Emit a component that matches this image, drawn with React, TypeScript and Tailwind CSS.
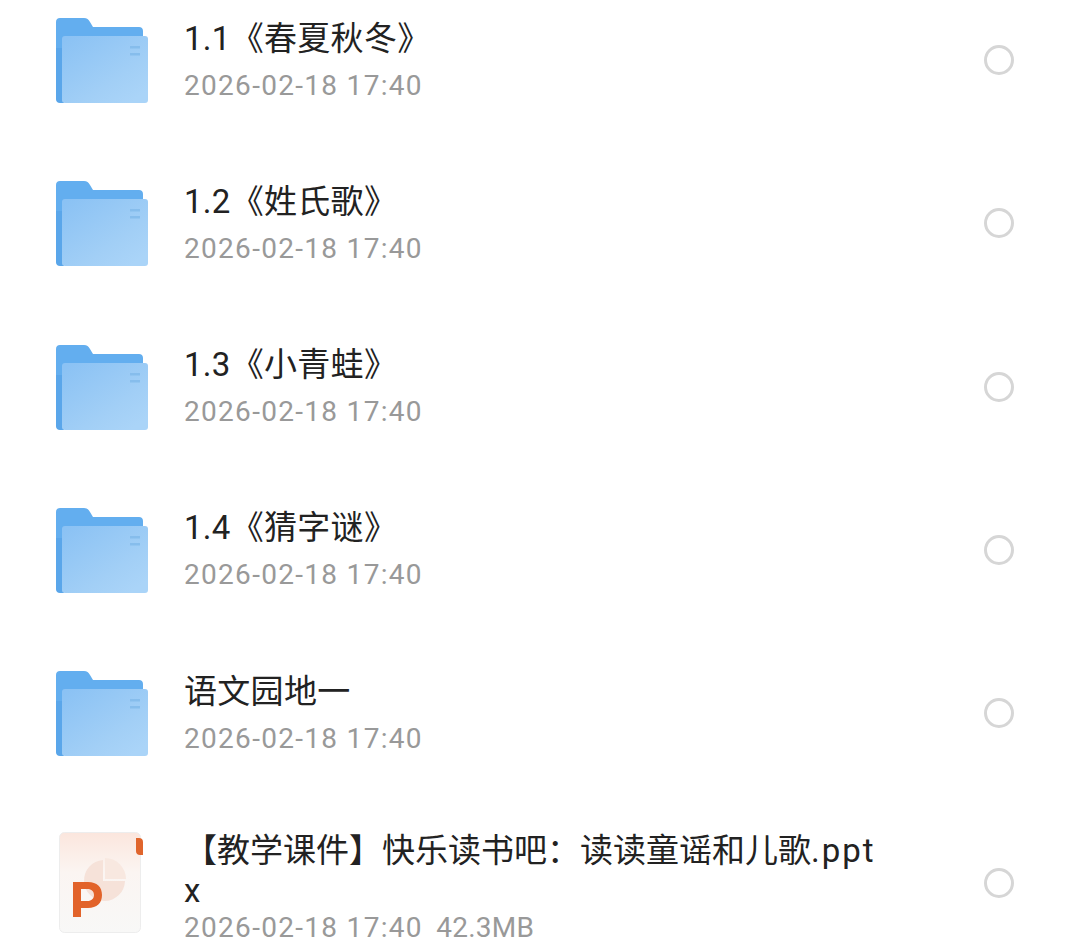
const fontStack = "font-['Roboto','Noto_Sans_CJK_SC',sans-serif]";

const folders = ['1.1《春夏秋冬》', '1.2《姓氏歌》', '1.3《小青蛙》', '1.4《猜字谜》', '语文园地一'];

function FolderIcon() {
  return (
    <svg width="92" height="86" viewBox="0 -1 92 86" className="shrink-0">
      <defs>
        <linearGradient id="folderFront" x1="0.1" y1="0" x2="0.9" y2="0.9">
          <stop offset="0" stopColor="#8bc2f4" />
          <stop offset="0.7" stopColor="#a2cff6" />
          <stop offset="1" stopColor="#aad4f8" />
        </linearGradient>
      </defs>
      <path
        d="M4 0H28C31 0 32.5 1.5 34 4L37 9H83C85.500 9 87 10.500 87 13V30H5V84C2 84 0 82 0 79V4C0 1.500 1.500 0 4 0Z"
        fill="#63aeef"
      />
      <path d="M0 30H8V85H4C1.500 85 0 83.500 0 81Z" fill="#5aa6ea" />
      <path
        d="M9 18H89C91 18 92 19 92 21V82C92 84 91 85 89 85H9C7 85 6 84 6 82V21C6 19 7 18 9 18Z"
        fill="url(#folderFront)"
      />
      <rect x="74" y="28" width="10" height="2.5" fill="#86bdec" />
      <rect x="74" y="35" width="10" height="2.5" fill="#86bdec" />
    </svg>
  );
}

function PptIcon() {
  return (
    <svg width="86" height="102" viewBox="0 0 86 102" className="shrink-0">
      <defs>
        <linearGradient id="pptPage" x1="0" y1="0" x2="0" y2="1">
          <stop offset="0" stopColor="#fbe6dd" />
          <stop offset="0.4" stopColor="#fbf5f2" />
          <stop offset="1" stopColor="#f8f8f7" />
        </linearGradient>
      </defs>
      <rect x="0.5" y="0.5" width="81" height="100" rx="5" fill="url(#pptPage)" stroke="#ededed" />
      <path d="M77 6H80C82.500 6 84 7.500 84 10V23H81C78.500 23 77 21.500 77 19Z" fill="#e0652c" />
      <path d="M44 28A20.500 20.500 0 1 0 66 49H44Z" fill="#f6e2d9" />
      <path d="M46 26V47H67A21 21 0 0 0 46 26Z" fill="#f8e8e0" />
      <path
        d="M14 85V50H29C38 50 43 55 43 63C43 71 38 76 29 76H22V85ZM22 69H28.500C32.500 69 35 66.500 35 63C35 59.500 32.500 57 28.500 57H22Z"
        fill="#e2632a"
      />
    </svg>
  );
}

function RadioCircle() {
  return <div className="w-[30px] h-[30px] rounded-full border-[3px] border-[#d6d6d6] shrink-0" />;
}

function FolderRow({ name }: { name: string }) {
  return (
    <div className="flex items-center h-[163.25px] pl-[56px] pr-[66px]">
      <FolderIcon />
      <div className="flex-1 pl-[36px]">
        <div className="text-[33px] leading-[44px] tracking-[0.3px] text-[#222222]">{name}</div>
        <div className="text-[28px] leading-[36px] mt-[7px] tracking-[1.3px] text-[#999999]">
          2026-02-18 17:40
        </div>
      </div>
      <RadioCircle />
    </div>
  );
}

export default function App() {
  return (
    <div className={`w-[1080px] h-[943px] overflow-hidden bg-white ${fontStack}`}>
      <div className="-mt-[21.5px]">
        {folders.map((name) => (
          <FolderRow key={name} name={name} />
        ))}
        <div className="flex items-center pl-[59px] pr-[66px] pt-[25px]">
          <PptIcon />
          <div className="flex-1 pl-[39px] pr-[102px] pt-[11px] pb-[4px]">
            <div className="text-[33px] leading-[40px] text-[#222222] break-all">
              【教学课件】快乐读书吧：读读童谣和儿歌<span className="tracking-[2px]">.ppt</span>x
            </div>
            <div className="text-[28px] leading-[30px] mt-[2px] tracking-[1.3px] text-[#999999]">
              2026-02-18 17:40&nbsp;&nbsp;<span className="ml-[-3px] tracking-[0.2px]">42.3MB</span>
            </div>
          </div>
          <RadioCircle />
        </div>
      </div>
    </div>
  );
}
